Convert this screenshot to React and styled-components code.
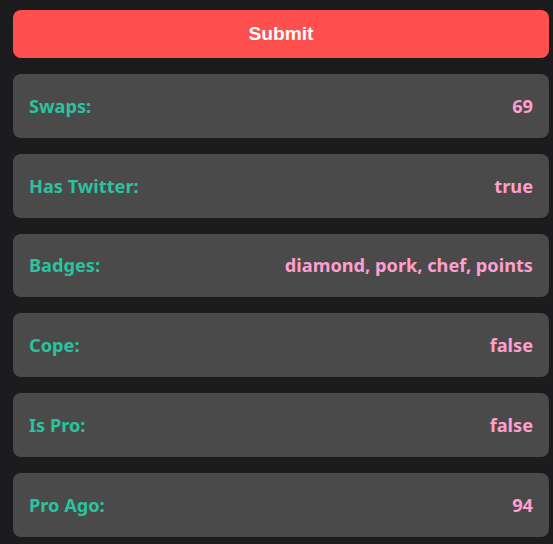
import styled, { createGlobalStyle } from 'styled-components'

const Global = createGlobalStyle`
  html, body {
    margin: 0;
    padding: 0;
    background: #1c1c1e;
  }
`

const Page = styled.div`
  width: 536px;
  padding: 10px 0 0 13px;
  display: flex;
  flex-direction: column;
  gap: 16px;
`

const SubmitButton = styled.button`
  height: 48px;
  border: none;
  border-radius: 8px;
  background: #ff4f4f;
  color: #ffffff;
  font-family: "Liberation Sans", Arial, sans-serif;
  font-weight: bold;
  font-size: 19.2px;
  cursor: pointer;
`

const Row = styled.div`
  height: 63.8px;
  padding: 0 16px;
  border-radius: 8px;
  background: #4a4a4a;
  display: flex;
  justify-content: space-between;
  align-items: center;
  font-family: "Noto Sans", "Open Sans", sans-serif;
  font-weight: bold;
  font-size: 18.2px;
`

const Label = styled.span`
  color: #2bc29f;
`

const Value = styled.span`
  color: #ff9fd0;
`

const rows = [
  ['Swaps:', '69'],
  ['Has Twitter:', 'true'],
  ['Badges:', 'diamond, pork, chef, points'],
  ['Cope:', 'false'],
  ['Is Pro:', 'false'],
  ['Pro Ago:', '94'],
]

const App = () => {
  return (
    <>
      <Global />
      <Page>
        <SubmitButton type="submit">Submit</SubmitButton>
        {rows.map(([label, value]) => (
          <Row key={label}>
            <Label>{label}</Label>
            <Value>{value}</Value>
          </Row>
        ))}
      </Page>
    </>
  )
}

export default App
